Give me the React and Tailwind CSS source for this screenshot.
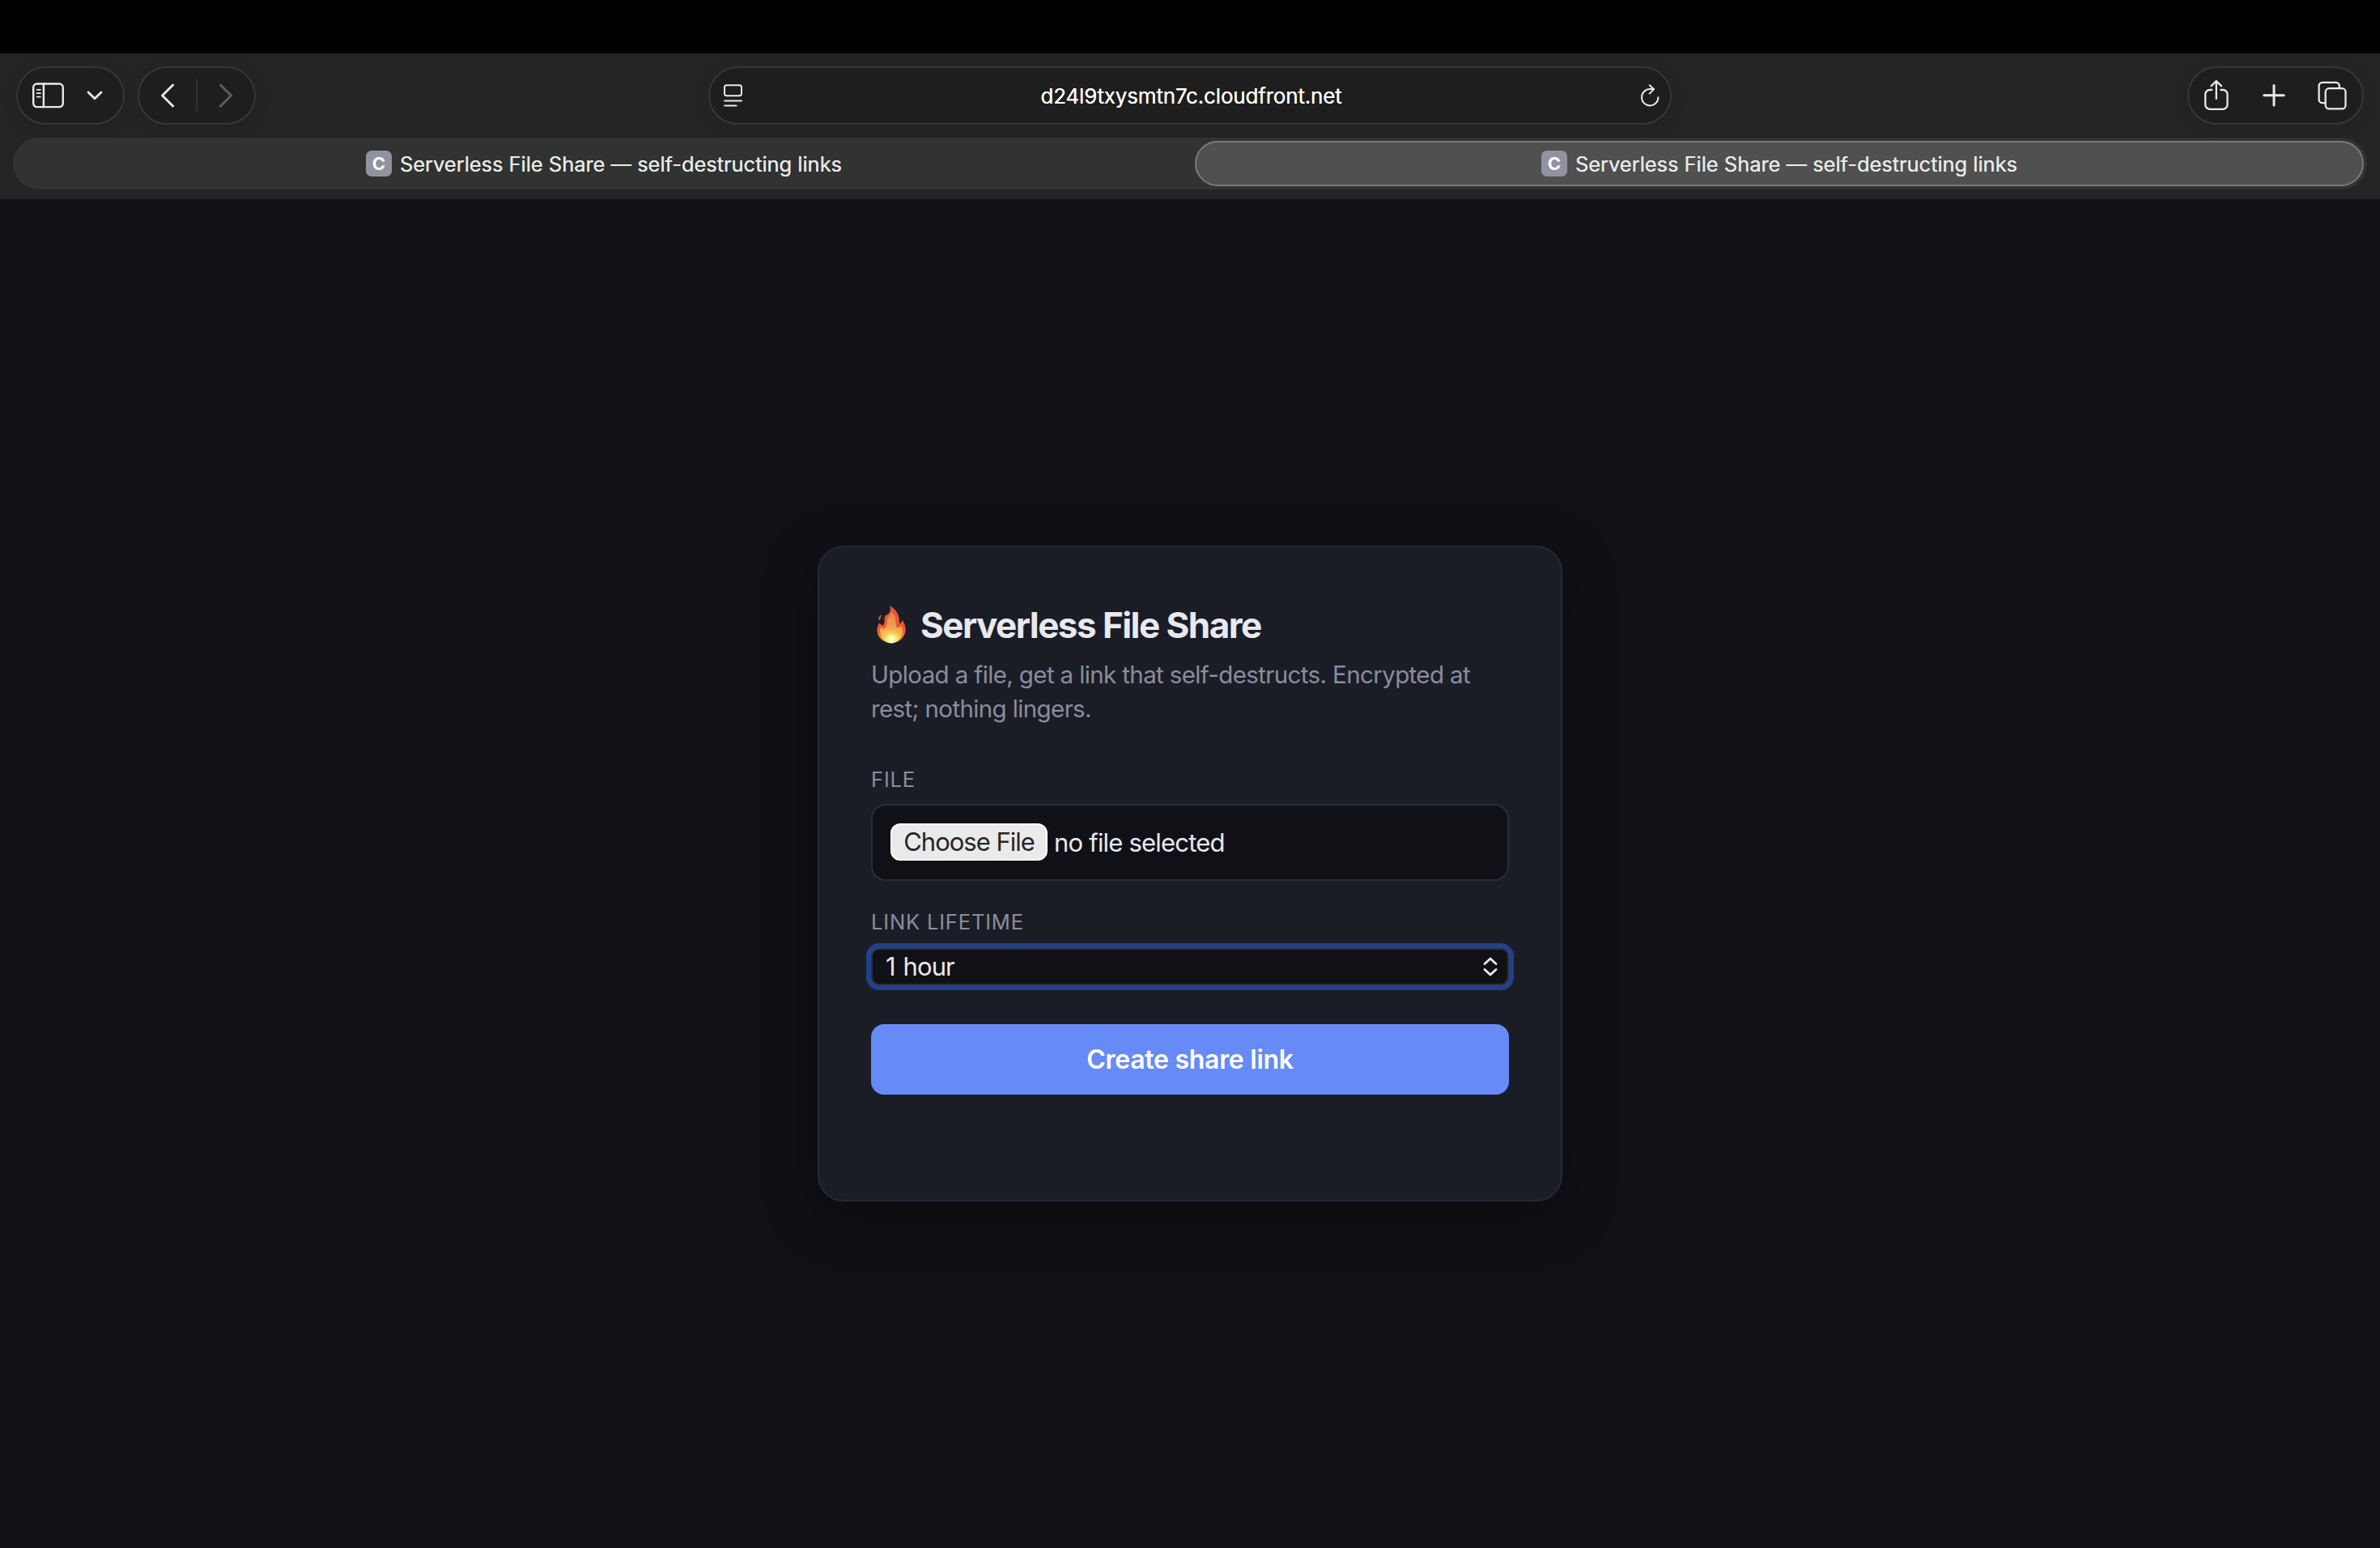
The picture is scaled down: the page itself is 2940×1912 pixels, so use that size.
import React from "react";

const stroke = {
  fill: "none",
  stroke: "currentColor",
  strokeLinecap: "round",
  strokeLinejoin: "round",
};

function Pill({ className, children }) {
  return (
    <div
      className={`flex h-[72px] shrink-0 items-center rounded-full border-2 border-[#363837] bg-[#1d1e1d] text-[#e8e9e8] shadow-[0_4px_20px_rgba(0,0,0,0.08)] ${className}`}
    >
      {children}
    </div>
  );
}

function SidebarIcon() {
  return (
    <svg className="h-8 w-10 shrink-0" viewBox="0 0 40 32" {...stroke} strokeWidth="2.4">
      <rect x="1.2" y="1.5" width="36.6" height="28.6" rx="4.5" />
      <path d="M13.900 1.5v28.6" />
      <path d="M5.700 8.800h4.2M5.700 13.200h4.2M5.700 17.600h4.2" strokeWidth="1.8" />
    </svg>
  );
}

function ReaderIcon() {
  return (
    <svg className="h-7 w-6 shrink-0" viewBox="0 0 24 28" {...stroke} strokeWidth="2">
      <rect x="1" y="1.2" width="21" height="13" rx="2.6" />
      <path d="M1.2 20.4h20.8M1.2 26.6h14.4" />
    </svg>
  );
}

function ReloadIcon() {
  return (
    <svg className="h-7 w-6 shrink-0" viewBox="0 0 24 28" {...stroke} strokeWidth="2">
      <path d="M22.400 16.2A10.2 10.2 0 1 1 12.200 6h4.6" />
      <path d="M11.700 1.200 17 6.200 11.700 11.600" />
    </svg>
  );
}

function ShareIcon() {
  return (
    <svg className="h-[38px] w-[30px] shrink-0" viewBox="0 0 30 38" {...stroke} strokeWidth="2.3">
      <path d="M9.3 12H6.8a5.6 5.6 0 0 0-5.6 5.6v12.6a5.6 5.6 0 0 0 5.6 5.6h16.1a5.6 5.6 0 0 0 5.6-5.6V17.6a5.6 5.6 0 0 0-5.6-5.6h-2.5" />
      <path d="M14.8 23V1.8M8.6 7.2l6.2-6 6.2 6" />
    </svg>
  );
}

function TabsIcon() {
  return (
    <svg className="h-9 w-9 shrink-0" viewBox="0 0 36 36" {...stroke} strokeWidth="2.3">
      <path d="M8.400 27.200H5.800A4.200 4.200 0 0 1 1.600 23V6a4.200 4.200 0 0 1 4.200-4.200h16.800A4.200 4.200 0 0 1 26.800 6v2.600" />
      <rect x="9.7" y="9.2" width="24.8" height="25.2" rx="4.4" />
    </svg>
  );
}

function FlameIcon() {
  return (
    <svg className="mb-0.5 -ml-px h-[47px] w-9" viewBox="0 0 36 47" role="img" aria-label="fire">
      <defs>
        <linearGradient id="outer" x1="0" y1="0" x2="0" y2="1">
          <stop offset="0" stopColor="#dd5a3a" />
          <stop offset="0.6" stopColor="#e9552f" />
          <stop offset="0.85" stopColor="#f08a3a" />
          <stop offset="1" stopColor="#e3b040" />
        </linearGradient>
        <linearGradient id="inner" x1="0" y1="0" x2="0" y2="1">
          <stop offset="0" stopColor="#ee8048" />
          <stop offset="0.5" stopColor="#f4a052" />
          <stop offset="0.75" stopColor="#f7bc50" />
          <stop offset="1" stopColor="#f9dc55" />
        </linearGradient>
        <radialGradient id="core" cx="0.5" cy="0.78" r="0.62">
          <stop offset="0" stopColor="#fffff0" />
          <stop offset="0.25" stopColor="#fffbb0" />
          <stop offset="0.6" stopColor="#fbe660" stopOpacity="0.6" />
          <stop offset="1" stopColor="#fae35a" stopOpacity="0" />
        </radialGradient>
      </defs>
      <path
        fill="url(#outer)"
        d="M16.200.3C22 3.500 26.800 9 27.600 15.500c.4 3 .3 5.300.9 6.700 2-.6 2.700-2.400 2.500-4.600C34.600 22 36.200 26.200 35.500 31.200 34.600 38.500 28 46.400 18 46.400S1.300 38.800.5 31.500C.2 27.500 1.400 24.500 3.200 21.500c1.400 1.600 2.800 2.400 4.800 2.700 1.600-2.200 1.700-4.700 1.500-7.700 0-3.300 1.300-4.700 3.700-5.300C17 9 17.600 4.500 16.200.3Z"
      />
      <path fill="#dc4f30" d="M2.300 18.600C1.600 15 2.900 12.600 5.700 11.200c-.1 2.500-.4 5.200-3.400 7.400Z" />
      <path
        fill="url(#inner)"
        d="M17.800 7.500c4 2.500 5.400 7 5.500 11.500.1 3.500.5 7 2 8.500 2 0 3.700-1 4.700-3 1.800 3.500 2.300 7.500 1 11C29.200 41 25 45.800 18 45.800S6.800 41 5 36c-1.300-3.800-1-6.500-.2-9.500 1.400 1.500 2.900 2 4.900 1.700 2.700-2 3-5.200 3.100-9.200C13 14 17.500 12.500 17.800 7.500Z"
      />
      <ellipse cx="18" cy="36" rx="11" ry="10.400" fill="url(#core)" />
    </svg>
  );
}

function TabTitle() {
  return (
    <>
      <span className="mr-2.5 flex size-8 items-center justify-center rounded-[7px] bg-[#9293a0] text-[22px] leading-8 font-bold text-white">
        C
      </span>
      <span className="pt-0.5 text-[25.5px] leading-8 tracking-[-0.04px] whitespace-nowrap text-[#e9eae9] [text-shadow:0_0_0.5px_#e9eae9]">
        Serverless File Share — self-destructing links
      </span>
    </>
  );
}

function Toolbar() {
  return (
    <div className="flex h-[88px] items-end justify-between pr-5 pl-5">
      <div className="flex w-[855px] gap-4">
        <Pill className="w-[134px] pl-[18px]">
          <SidebarIcon />
          <svg className="ml-[27px] h-3 w-5" viewBox="0 0 20 12" {...stroke} strokeWidth="2.8">
            <path d="M2 2l8 7.800L18 2" />
          </svg>
        </Pill>
        <Pill className="w-[146px] pl-[26px]">
          <svg className="h-[30px] w-[18px]" viewBox="0 0 18 30" {...stroke} strokeWidth="2.900">
            <path d="M15.600 2 2.500 15l13.100 13" />
          </svg>
          <div className="ml-[26px] h-10 w-0.5 bg-[#2e302f]" />
          <svg className="ml-[26px] h-[30px] w-[18px] text-[#5f6160]" viewBox="0 0 18 30" {...stroke} strokeWidth="2.900">
            <path d="M2.400 2l13.100 13L2.400 28" />
          </svg>
        </Pill>
      </div>
      <Pill className="w-[1190px] justify-between pr-[13px] pl-[17px]">
        <ReaderIcon />
        <span className="pt-0.5 pr-px text-[26px] leading-8 tracking-[-0.18px] text-white [text-shadow:0_0_0.5px_#fff]">
          d24l9txysmtn7c.cloudfront.net
        </span>
        <ReloadIcon />
      </Pill>
      <div className="flex w-[855px] justify-end">
        <Pill className="w-[218px] justify-between pr-[19px] pl-[19px]">
          <ShareIcon />
          <svg className="ml-px h-7 w-7" viewBox="0 0 28 28" {...stroke} strokeWidth="3">
            <path d="M14 1.500v24.400M1.800 13.700h24.400" />
          </svg>
          <TabsIcon />
        </Pill>
      </div>
    </div>
  );
}

function Label({ children, className }) {
  return (
    <div className={`h-8 text-[25.6px] leading-[31px] tracking-[0.78px] text-[#8b8d9d] ${className}`}>
      {children}
    </div>
  );
}

function ShareCard() {
  return (
    <main className="h-[810px] w-[920px] rounded-[32px] border-2 border-[#262833] bg-[#1b1d26] px-16 pt-[69px] shadow-[0_16px_64px_rgba(0,0,0,0.35)]">
      <h1 className="flex h-[54px] items-center pl-2 text-[44px] leading-[54px] font-bold tracking-[-1.54px] text-[#e8e9ee]">
        <FlameIcon />
        <span className="ml-[18px]">Serverless File Share</span>
      </h1>
      <p className="mt-[13px] text-[29.5px] leading-[42px] tracking-[-0.62px] text-[#8b8d9d]">
        Upload a file, get a link that self-destructs. Encrypted at
        <br />
        rest; nothing lingers.
      </p>

      <Label className="mt-[51px]">FILE</Label>
      <div className="mt-[14px] flex h-[95px] items-center rounded-[18px] border-2 border-[#2a2d3a] bg-[#101116] pl-[22px]">
        <button className="mb-px h-[46px] w-[194px] rounded-xl border-2 border-white bg-[#eaeaea] text-[31px] leading-[42px] tracking-[-1.01px] text-[#262626]">
          Choose File
        </button>
        <span className="ml-[8px] text-[31px] leading-[42px] tracking-[-0.8px] text-[#e8e9ee]">
          no file selected
        </span>
      </div>

      <Label className="mt-[35px]">LINK LIFETIME</Label>
      <div className="mt-[16px] flex h-[46px] items-center justify-between rounded-[10px] border-2 border-[#2d3040] bg-[#101116] pr-3 pl-4 text-[31px] leading-[42px] tracking-[-0.9px] text-[#e8e9ee] ring-6 ring-[#23418a]">
        <span className="[word-spacing:2px]">1 hour</span>
        <svg className="h-6 w-[18px]" viewBox="0 0 18 24" {...stroke} strokeWidth="2.800">
          <path d="M2 8.600 9 1.900l7 6.700M2 15.400l7 6.700 7-6.700" />
        </svg>
      </div>

      <button className="mt-12 block h-[87px] w-full rounded-2xl bg-[#668bf7] text-[32px] leading-[87px] font-semibold tracking-[-0.28px] text-white">
        Create share link
      </button>
    </main>
  );
}

export default function App() {
  return (
    <div className="flex h-[1912px] w-[2940px] flex-col overflow-hidden bg-[#101116] font-['Inter',sans-serif]">
      <div className="h-[66px] shrink-0 bg-black" />
      <header className="h-[180px] shrink-0 bg-[#232524]">
        <Toolbar />
        <div className="mx-4 mt-4 flex h-16 items-center rounded-full bg-[#313332] px-1">
          <div className="flex h-14 w-[1456px] items-center justify-center pr-1">
            <TabTitle />
          </div>
          <div className="flex h-14 flex-1 items-center justify-center rounded-full border-2 border-[#787b79] bg-[#4f504f]">
            <TabTitle />
          </div>
        </div>
      </header>
      <div className="flex flex-1 items-center justify-center">
        <ShareCard />
      </div>
    </div>
  );
}
